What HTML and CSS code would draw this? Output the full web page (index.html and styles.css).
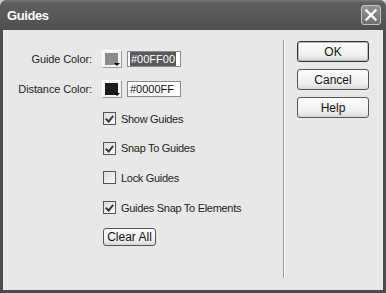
FILE: index.html
```html
<!DOCTYPE html>
<html lang="en">
<head>
  <meta charset="UTF-8">
  <title>Guides</title>
  <link rel="stylesheet" href="styles.css">
</head>
<body>
  <div class="window">
    <div class="titlebar">
      <span class="title">Guides</span>
      <span class="close">
        <svg width="14" height="14" viewBox="0 0 14 14">
          <path d="M2.5 2.5 L11.5 11.5 M11.5 2.5 L2.5 11.5" stroke="#fff" stroke-width="2.4" stroke-linecap="square"/>
        </svg>
      </span>
    </div>

    <div class="client">
      <div class="main">
        <div class="color-grid">
          <span class="label">Guide Color:</span>
          <div class="picker">
            <span class="swatch"><span class="chip chip-gray"></span><span class="arrow"></span></span>
            <span class="hex"><span class="selected">#00FF00</span></span>
          </div>

          <span class="label">Distance Color:</span>
          <div class="picker">
            <span class="swatch"><span class="chip chip-dark"></span><span class="arrow"></span></span>
            <span class="hex">#0000FF</span>
          </div>
        </div>

        <div class="checks">
          <div class="check"><span class="box checked"></span>Show Guides</div>
          <div class="check"><span class="box checked"></span>Snap To Guides</div>
          <div class="check"><span class="box"></span>Lock Guides</div>
          <div class="check"><span class="box checked"></span>Guides Snap To Elements</div>
        </div>

        <button class="btn clear">Clear All</button>
      </div>

      <div class="divider"></div>

      <div class="actions">
        <button class="btn default">OK</button>
        <button class="btn">Cancel</button>
        <button class="btn">Help</button>
      </div>
    </div>
  </div>
</body>
</html>
```

FILE: styles.css
```css
body {
  margin: 0;
  padding: 0;
  background: #cfcfcf;
  font-family: "Liberation Sans", Arial, sans-serif;
  font-size: 11px;
  color: #111;
}

.window {
  width: 386px;
  height: 293px;
  display: flex;
  flex-direction: column;
  border-radius: 7px 7px 0 0;
  overflow: hidden;
  background: #4c4c4c;
}

/* Title bar */
.titlebar {
  height: 30px;
  flex: none;
  display: flex;
  align-items: center;
  justify-content: space-between;
  padding: 0 5px 0 7px;
  background: linear-gradient(#7a7a7a 0px, #5e5e5e 3px, #585858 15px, #4e4e4e 30px);
  box-sizing: border-box;
}
.title {
  color: #fff;
  font-weight: bold;
  font-size: 13px;
  letter-spacing: -0.4px;
  margin-top: 1px;
}
.close {
  width: 18px;
  height: 18px;
  border: 1px solid #c4c4c4;
  border-radius: 3px;
  background: linear-gradient(#949494, #6e6e6e);
  display: flex;
  align-items: center;
  justify-content: center;
}

/* Client area */
.client {
  flex: 1;
  display: flex;
  margin: 0 3px 3px 3px;
  background: #e8e8e8;
}
.main {
  width: 280px;
  padding-top: 20px;
  box-sizing: border-box;
}

.color-grid {
  display: grid;
  grid-template-columns: 89px auto;
  column-gap: 10px;
  row-gap: 12px;
  align-items: center;
}
.label {
  text-align: right;
  color: #222;
  letter-spacing: -0.1px;
}
.picker {
  display: flex;
  align-items: center;
  gap: 5px;
}
.swatch {
  width: 20px;
  height: 18px;
  box-sizing: border-box;
  border: 1px solid #999;
  border-top-color: #fff;
  border-left-color: #fff;
  background: #f4f4f4;
  position: relative;
}
.chip {
  position: absolute;
  left: 2px;
  top: 2px;
  width: 13px;
  height: 12px;
}
.chip-gray { background: #8c8c8c; }
.chip-dark { background: #1c1c1c; }
.arrow {
  position: absolute;
  right: 1px;
  bottom: 1px;
  width: 0;
  height: 0;
  border-left: 3px solid transparent;
  border-right: 3px solid transparent;
  border-top: 3px solid #000;
}
.hex {
  width: 54px;
  height: 16px;
  box-sizing: border-box;
  border: 1px solid #8a8a8a;
  background: #fff;
  padding: 0 2px;
  line-height: 14px;
  font-size: 11px;
  color: #111;
}
.selected {
  background: #5a5a5a;
  color: #fff;
  padding: 1px 1px;
}

/* Check boxes */
.checks {
  padding-left: 100px;
  margin-top: 14px;
}
.check {
  display: flex;
  align-items: center;
  gap: 5px;
  height: 13px;
  margin-bottom: 16.7px;
  color: #222;
  letter-spacing: -0.3px;
}
.box {
  width: 13px;
  height: 13px;
  box-sizing: border-box;
  border: 1px solid #555;
  background: linear-gradient(135deg, #dcdcdc, #fafafa);
  position: relative;
}
.box.checked::after {
  content: "";
  position: absolute;
  left: 3px;
  top: 1px;
  width: 3px;
  height: 6px;
  border: solid #3a3a3a;
  border-width: 0 2px 2px 0;
  transform: rotate(40deg);
}

/* Buttons */
.btn {
  font-family: "Liberation Sans", Arial, sans-serif;
  font-size: 11px;
  color: #111;
  border: 1px solid #555;
  border-radius: 3px;
  background: linear-gradient(#fdfdfd, #efefef 70%, #d8d8d8);
  padding: 0;
  box-sizing: border-box;
}
.clear {
  width: 53px;
  height: 18px;
  margin-left: 100px;
  margin-top: -4px;
  font-size: 12px;
}

.divider {
  width: 1px;
  margin: 10px 0 12px 0;
  background: #9a9a9a;
  box-shadow: 1px 0 0 #fff;
}

.actions {
  display: flex;
  flex-direction: column;
  gap: 7px;
  padding-top: 11px;
  margin-left: 13px;
}
.actions .btn {
  width: 72px;
  height: 21px;
  font-size: 12px;
}
.actions .default {
  border-color: #333;
  box-shadow: inset 0 0 0 1px #bbb;
}
```
